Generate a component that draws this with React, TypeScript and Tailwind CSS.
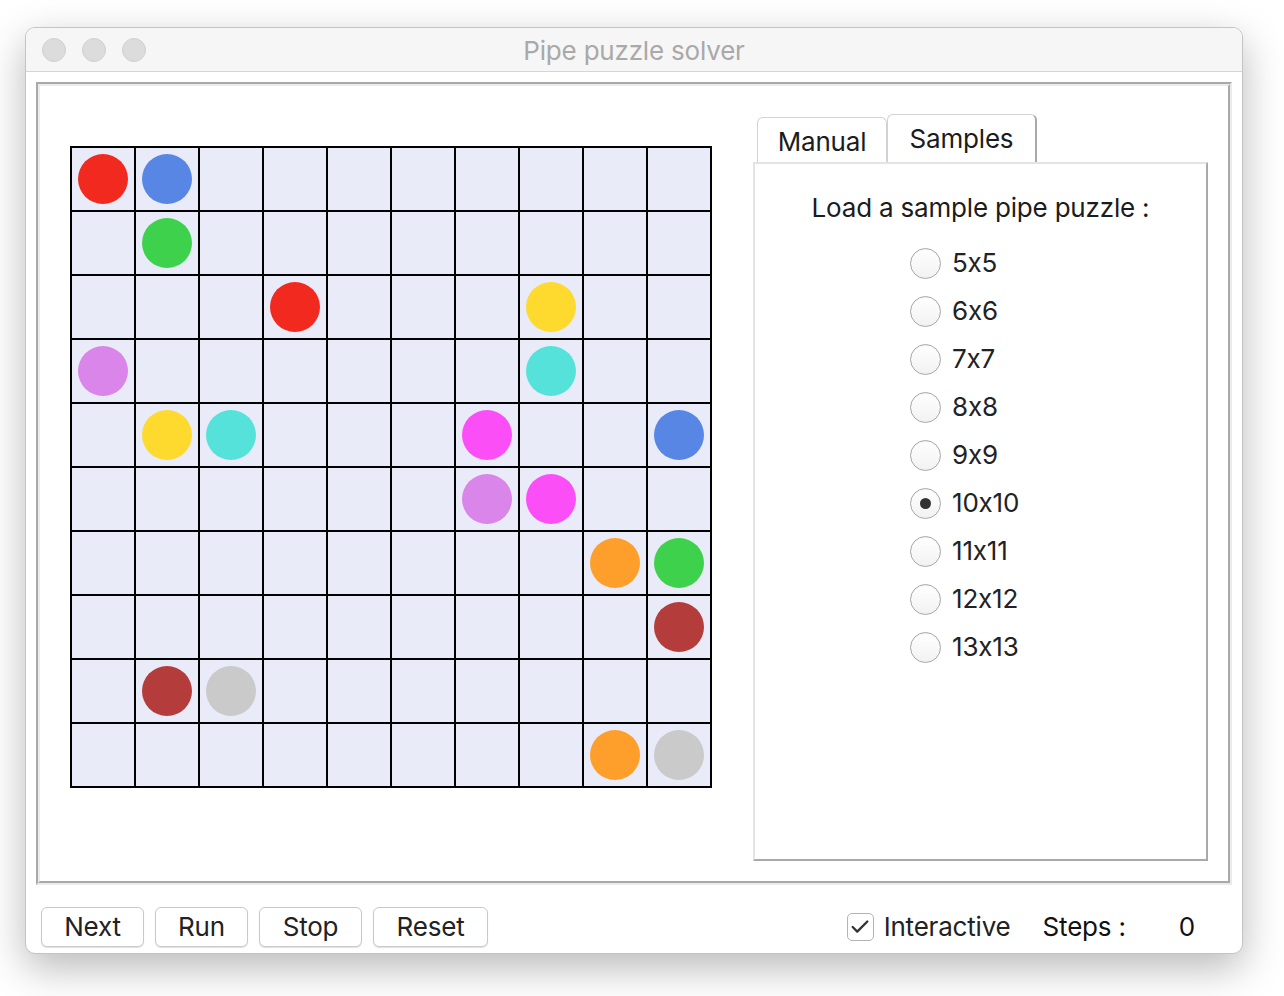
import { Check } from "lucide-react";

const C = {
  red: "#f2291e",
  blue: "#5786e5",
  green: "#3ed14c",
  yellow: "#fed92e",
  violet: "#d985e9",
  cyan: "#55e2da",
  magenta: "#fc4ef6",
  orange: "#fe9f2b",
  maroon: "#b43c3b",
  gray: "#cacaca",
};

// [row, col, color]
const dots: [number, number, string][] = [
  [0, 0, C.red],
  [0, 1, C.blue],
  [1, 1, C.green],
  [2, 3, C.red],
  [2, 7, C.yellow],
  [3, 0, C.violet],
  [3, 7, C.cyan],
  [4, 1, C.yellow],
  [4, 2, C.cyan],
  [4, 6, C.magenta],
  [4, 9, C.blue],
  [5, 6, C.violet],
  [5, 7, C.magenta],
  [6, 8, C.orange],
  [6, 9, C.green],
  [7, 9, C.maroon],
  [8, 1, C.maroon],
  [8, 2, C.gray],
  [9, 8, C.orange],
  [9, 9, C.gray],
];

const sizes = ["5x5", "6x6", "7x7", "8x8", "9x9", "10x10", "11x11", "12x12", "13x13"];

function Board() {
  const cells = [];
  for (let r = 0; r < 10; r++) {
    for (let c = 0; c < 10; c++) {
      const d = dots.find((x) => x[0] === r && x[1] === c);
      cells.push(
        <div key={r + "-" + c} className="w-[62px] h-[62px] bg-[#e9ebf9] flex items-center justify-center">
          {d && <div className="w-[50px] h-[50px] rounded-full" style={{ backgroundColor: d[2] }} />}
        </div>
      );
    }
  }
  return <div className="grid grid-cols-[repeat(10,62px)] gap-[2px] p-[2px] bg-black w-[642px] h-[642px]">{cells}</div>;
}

function Radio({ label, checked }: { label: string; checked?: boolean }) {
  return (
    <div className="h-[48px] flex items-center gap-[11px]">
      <div className="w-[31px] h-[31px] rounded-full border border-[#a8a8a8] bg-gradient-to-b from-white to-[#f2f2f2] flex items-center justify-center shadow-[inset_0_1px_1px_rgba(0,0,0,0.05)]">
        {checked && <div className="w-[11px] h-[11px] rounded-full bg-[#333]" />}
      </div>
      <span className="text-[26px] text-[#222]">{label}</span>
    </div>
  );
}

function Btn({ label, w }: { label: string; w: string }) {
  return (
    <div className={"h-[40px] rounded-[6px] border border-[#c9c9c9] bg-white shadow-[0_1px_1px_rgba(0,0,0,0.12)] flex items-center justify-center text-[26px] text-[#222] " + w}>
      {label}
    </div>
  );
}

export default function App() {
  return (
    <div className="w-[1284px] h-[996px] bg-white pt-[27px] pl-[25px] font-['Inter','Liberation_Sans',sans-serif] leading-none tracking-[-0.012em] [font-feature-settings:'calt'_0]">
      <div className="w-[1218px] h-[927px] rounded-[10px] border border-[#c4c4c4] bg-white shadow-[0_14px_40px_rgba(0,0,0,0.28)] flex flex-col overflow-hidden">
        {/* title bar */}
        <div className="h-[44px] bg-[#f6f6f6] border-b border-[#d6d6d6] grid grid-cols-[1fr_auto_1fr] items-center">
          <div className="flex gap-[16px] pl-[16px]">
            <div className="w-[24px] h-[24px] rounded-full bg-[#dcdcdc] border border-[#d0d0d0]" />
            <div className="w-[24px] h-[24px] rounded-full bg-[#dcdcdc] border border-[#d0d0d0]" />
            <div className="w-[24px] h-[24px] rounded-full bg-[#dcdcdc] border border-[#d0d0d0]" />
          </div>
          <div className="text-[26px] text-[#a9a9a9] pt-[2px]">Pipe puzzle solver</div>
          <div />
        </div>

        {/* body */}
        <div className="px-[10px] pt-[10px]">
          <div className="h-[803px] border-2 border-t-[#a9a9a9] border-l-[#a9a9a9] border-r-[#ebebeb] border-b-[#ebebeb]">
            <div className="h-full border-2 border-t-[#ebebeb] border-l-[#ebebeb] border-r-[#a9a9a9] border-b-[#a9a9a9] flex">
              <div className="pl-[30px] pt-[60px]">
                <Board />
              </div>
              <div className="ml-[41px] mt-[28px] w-[455px] h-[747px] flex flex-col">
                <div className="h-[48px] flex items-end pl-[4px]">
                  <div className="w-[130px] h-[45px] rounded-t-[6px] border border-b-0 border-[#d2d2d2] bg-white flex items-center justify-center text-[26px] text-[#1c1c1c] pt-[3px]">
                    Manual
                  </div>
                  <div className="w-[150px] h-[48px] rounded-t-[6px] border-t border-l border-[#d2d2d2] border-r-2 border-r-[#a9a9a9] bg-white flex items-center justify-center text-[26px] text-[#1c1c1c]">
                    Samples
                  </div>
                </div>
                <div className="flex-1 border-2 border-t-[#e4e4e4] border-l-[#e4e4e4] border-r-[#a9a9a9] border-b-[#a9a9a9] bg-white">
                  <div className="pt-[31px] text-center text-[26px] text-[#1c1c1c]">Load a sample pipe puzzle :</div>
                  <div className="pl-[155px] pt-[18px] flex flex-col">
                    {sizes.map((s) => (
                      <Radio key={s} label={s} checked={s === "10x10"} />
                    ))}
                  </div>
                </div>
              </div>
            </div>
          </div>
        </div>

        {/* bottom bar */}
        <div className="flex items-center pt-[22px] pl-[15px] pr-[47px]">
          <div className="flex gap-[11px]">
            <Btn label="Next" w="w-[103px]" />
            <Btn label="Run" w="w-[93px]" />
            <Btn label="Stop" w="w-[103px]" />
            <Btn label="Reset" w="w-[115px]" />
          </div>
          <div className="ml-auto flex items-center text-[26px] text-[#222]">
            <div className="w-[27px] h-[28px] rounded-[5px] border border-[#b3b3b3] bg-white flex items-center justify-center">
              <Check size={22} strokeWidth={2.5} color="#333" />
            </div>
            <span className="ml-[10px]">Interactive</span>
            <span className="ml-[32px] text-[#111]">Steps :</span>
            <span className="ml-[53px] text-[#111]">0</span>
          </div>
        </div>
      </div>
    </div>
  );
}
